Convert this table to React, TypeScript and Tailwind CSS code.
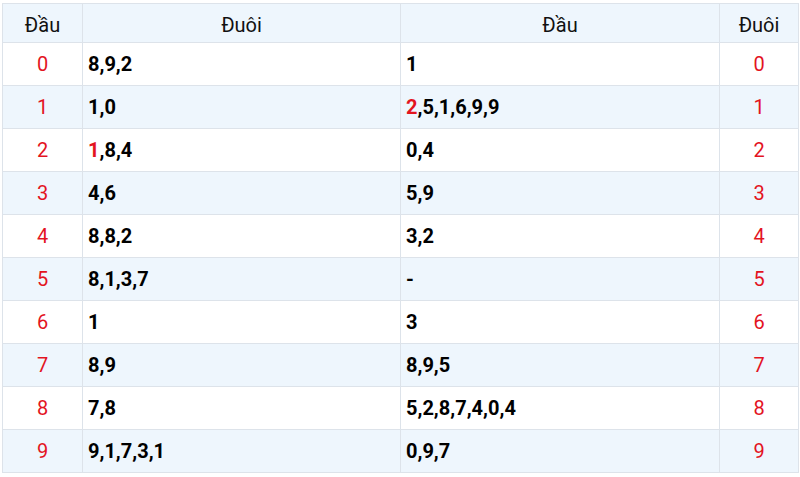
const rows: { n: number; tail: string; head: string; tailHot?: boolean; headHot?: boolean }[] = [
  { n: 0, tail: "8,9,2", head: "1" },
  { n: 1, tail: "1,0", head: "2,5,1,6,9,9", headHot: true },
  { n: 2, tail: "1,8,4", head: "0,4", tailHot: true },
  { n: 3, tail: "4,6", head: "5,9" },
  { n: 4, tail: "8,8,2", head: "3,2" },
  { n: 5, tail: "8,1,3,7", head: "-" },
  { n: 6, tail: "1", head: "3" },
  { n: 7, tail: "8,9", head: "8,9,5" },
  { n: 8, tail: "7,8", head: "5,2,8,7,4,0,4" },
  { n: 9, tail: "9,1,7,3,1", head: "0,9,7" },
];

const headers = ["Đầu", "Đuôi", "Đầu", "Đuôi"];

function Digits({ value, hot }: { value: string; hot?: boolean }) {
  if (!hot) return <>{value}</>;
  return (
    <>
      <span className="text-[#e3141f]">{value[0]}</span>
      {value.slice(1)}
    </>
  );
}

export default function App() {
  return (
    <div className="h-[477px] w-[800px] bg-white pl-[2px] pt-[3px] font-['Roboto',sans-serif]">
      <table className="w-[797px] table-fixed border-collapse border border-[#dde3ea] text-black">
        <colgroup>
          <col className="w-[80px]" />
          <col className="w-[318px]" />
          <col className="w-[319px]" />
          <col />
        </colgroup>
        <thead>
          <tr className="h-[39px] bg-[#eef6fd]">
            {headers.map((h, i) => (
              <th key={i} className="border border-[#dde3ea] pt-[3px] text-[20px] leading-none font-normal text-[#111]">
                {h}
              </th>
            ))}
          </tr>
        </thead>
        <tbody>
          {rows.map((r) => (
            <tr key={r.n} className={`h-[43px] ${r.n % 2 === 1 ? "bg-[#eef6fd]" : "bg-white"}`}>
              <td className="border border-[#dde3ea] text-center text-[20px] text-[#e3141f]">{r.n}</td>
              <td className="border border-[#dde3ea] pl-[5px] text-[20px] font-bold">
                <Digits value={r.tail} hot={r.tailHot} />
              </td>
              <td className="border border-[#dde3ea] pl-[5px] text-[20px] font-bold">
                <Digits value={r.head} hot={r.headHot} />
              </td>
              <td className="border border-[#dde3ea] text-center text-[20px] text-[#e3141f]">{r.n}</td>
            </tr>
          ))}
        </tbody>
      </table>
    </div>
  );
}
